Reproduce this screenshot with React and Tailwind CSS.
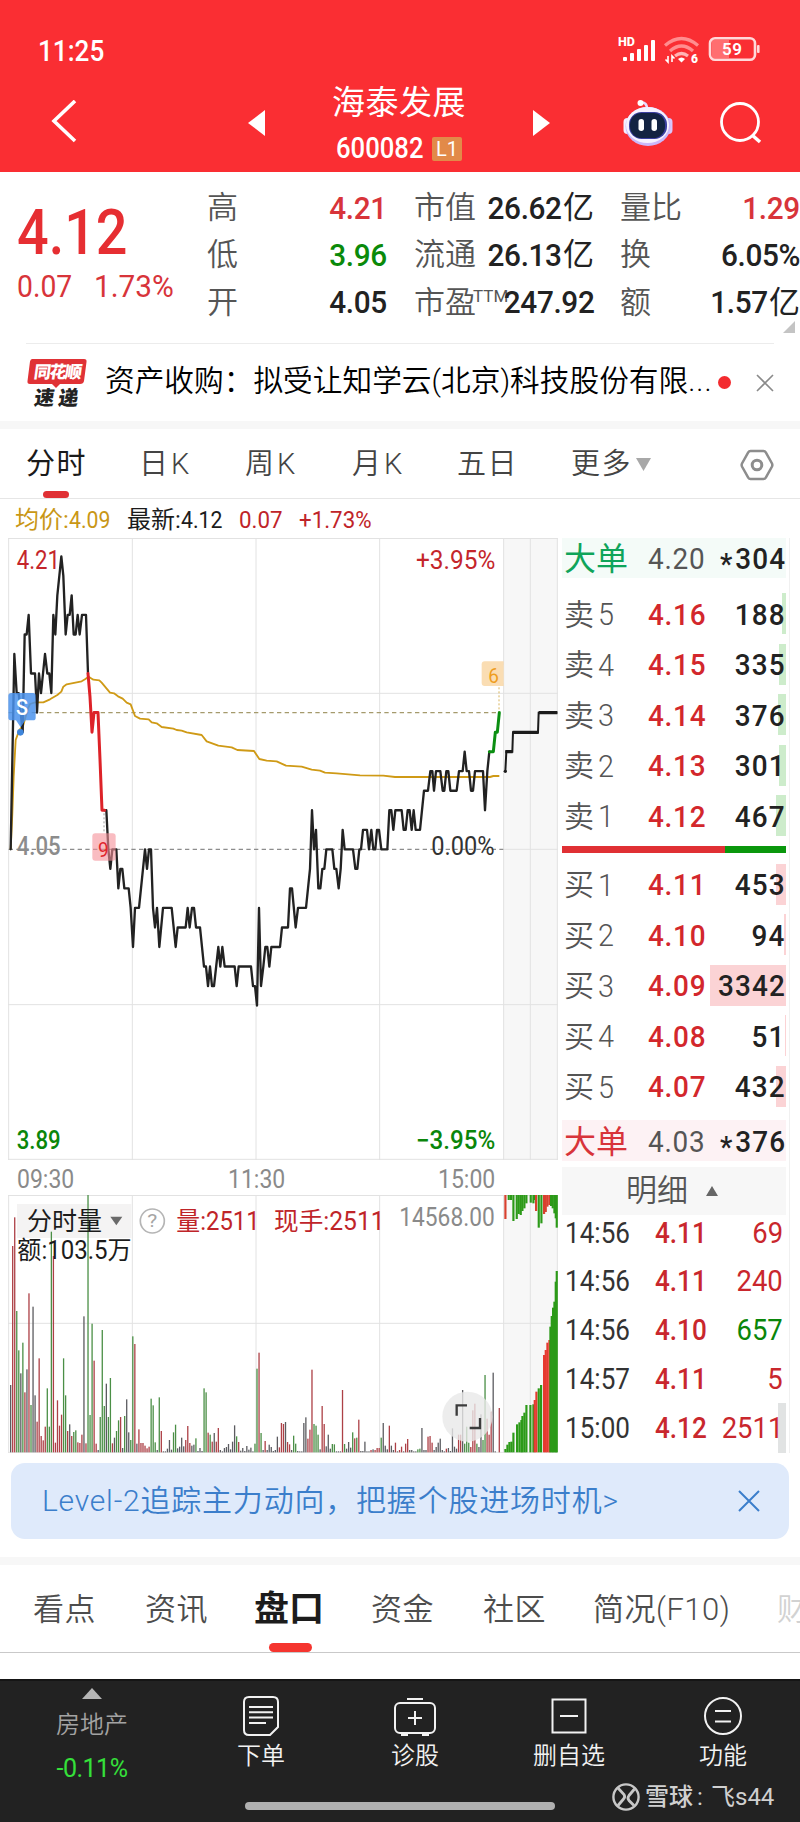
import React from "react";
import clsx from "clsx";

// [x, ticks from the previous close], x in chart units
const priceOpen = [
  [32, 0], [43, 10], [50, 8], [56, 8], [62, 7], [68, 6], [74, 11], [80, 11], [86, 12], [93, 9], [105, 9], [111, 7], [117, 9],
  [123, 8], [135, 10], [142, 9], [148, 9], [154, 8], [160, 12], [166, 11], [172, 13], [184, 15], [190, 14],
  [197, 11], [203, 12], [209, 12], [215, 13], [221, 11], [227, 11], [233, 12], [239, 11], [246, 12], [258, 12], [264, 9],
];
const priceDrop = [[264, 9], [270, 7.8], [276, 6], [282, 7], [294, 7], [300, 4.6], [306, 2], [314, 2]];
const priceMain = [
  [313, 2], [319, 2], [325, 0], [331, -1], [337, 0], [349, 0], [355, -2], [361, -1], [367, -1], [373, -2], [386, -2],
  [392, -3], [399, -5], [405, -3], [417, -3], [423, -2], [435, 0], [441, -1], [447, 0], [453, 0], [459, -3], [465, -4],
  [471, -3], [478, -5], [489, -3], [515, -3], [527, -5], [533, -4], [557, -4], [563, -3], [569, -4], [576, -3],
  [582, -3], [588, -4], [600, -4], [612, -6], [618, -6], [624, -7], [630, -6], [636, -7], [642, -7], [655, -5],
  [661, -6], [667, -5], [674, -6], [704, -6], [710, -7], [716, -6], [753, -6], [759, -7], [765, -7], [771, -8],
  [777, -3], [783, -7], [790, -6], [796, -5], [802, -5], [808, -6], [814, -5], [840, -5], [846, -4], [864, -4],
  [870, -2], [876, -2], [887, -4], [894, -3], [918, -3], [930, -1], [936, 2], [942, 0], [948, 1], [955, -2],
  [961, -2], [967, -1], [973, -1], [979, 0], [997, 0], [1003, -1], [1009, -1], [1016, -2], [1022, -1], [1028, 1],
  [1034, 0], [1059, 0], [1066, -1], [1072, -1], [1078, 0], [1083, 0], [1089, 1], [1101, 1], [1107, 0], [1114, 1],
  [1120, 0], [1126, 0], [1131, 1], [1137, 1], [1144, 0], [1162, 0], [1168, 2], [1174, 2], [1180, 1], [1186, 2], [1205, 2],
  [1211, 1], [1217, 1], [1223, 2], [1229, 2], [1235, 1], [1241, 2], [1247, 1], [1260, 1], [1272, 3], [1284, 3],
  [1291, 4], [1297, 4], [1302, 3], [1308, 4], [1321, 4], [1328, 3], [1333, 3], [1339, 4], [1345, 4], [1351, 3],
  [1370, 3], [1377, 4], [1388, 4], [1394, 5], [1400, 4], [1407, 4], [1413, 3], [1419, 3], [1425, 4], [1449, 4],
  [1455, 2], [1462, 4], [1468, 5],
];
const priceRise = [[1468, 5], [1480, 5], [1486, 6], [1492, 6], [1498, 7]];
const avgPoints =
  "32,958 37,850 41,740 47,630 58,600 70,585 84,535 90,522 105,517 130,517 150,508 172,495 184,485 190,470 200,463 245,454 255,448 266,440 280,449 298,451 305,458 330,488 342,490 354,499 368,506 380,518 392,523 405,558 420,566 446,568 455,577 470,580 485,591 520,596 530,600 545,602 560,607 605,615 620,634 655,647 695,652 712,660 762,663 778,687 800,692 830,694 858,707 905,710 935,719 960,722 975,728 1010,730 1080,736 1150,737 1185,741 1470,741 1480,738 1498,738";

// volume per minute, ten bars on each line: height + color key
const volumeRows = [
  "202k 619r 705r 424g 306g 237k 329g 180r 249k 477r",
  "142g 437k 171k 92r 282r 49r 36r 77r 192g 77g",
  "662g 589r 29r 156r 80r 113r 282g 171g 64r 84k",
  "49r 61g 66g 30r 28r 53r 408k 27r 774g 112g",
  "386g 275r 26r 7k 106g 367g 139g 206k 106g 223g",
  "27r 44k 64g 96g 106r 13k 109g 159k 60k 37g",
  "348g 325r 26k 69r 28r 28r 20r 12r 17r 161g",
  "141g 30g 7k 165g 64r 3k 3k 11k 37k 8k",
  "60g 83g 12k 17k 44k 18k 37r 79r 28r 20k",
  "23k 42g 4k 13k 4k 192g 180g 59r 53g 32r",
  "58k 32r 73r 7k 3k 13k 16k 25k 9k 32k",
  "81k 48g 31r 5k 13k 4k 19k 8k 14k 3k",
  "26g 251g 299r 58g 7k 34r 7k 23k 16k 4k",
  "7k 47k 15r 88r 85r 91k 31r 24r 7k 50g",
  "26g 4k 3k 3k 88k 105k 41r 68r 248r 85g",
  "80g 53g 9k 139r 85r 18k 53k 11k 25g 24g",
  "3k 3k 3k 187r 25g 11k 31k 14k 60g 42r",
  "44g 98r 4k 4k 32k 3k 3k 7r 9k 7r",
  "13r 13r 44g 88k 20k 9k 80r 20k 7k 29r",
  "3k 7r 17r 3k 26r 40r 7k 7k 3k 3k",
  "9g 11g 73k 7k 7k 47r 49r 29r 7k 16k",
  "29k 41k 7k 3k 11r 13k 4k 72k 17k 11k",
  "53r 53r 187k 26g 77g 29g 16r 126r 146r 26g",
  "16k 114k 37g 232g 101r 53r 122r 239k 3k 0k",
  "133r",
];
const volumeColors = { r: "#ad4046", g: "#4b8f46", k: "#5c5c60" };
const volumes = volumeRows.join(" ").split(" ");

// call auction: [x, top, color]
const auctionBars = [
  [1513, 927, "g"], [1519, 914, "g"], [1525, 906, "g"], [1531, 905, "g"], [1537, 878, "g"], [1548, 853, "g"],
  [1555, 847, "g"], [1561, 840, "g"], [1564, 828, "g"], [1570, 818, "g"], [1576, 795, "g"], [1588, 795, "g"],
  [1597, 793, "g"], [1601, 780, "r"], [1606, 755, "r"], [1613, 745, "g"], [1620, 735, "g"], [1629, 645, "r"],
  [1634, 630, "r"], [1639, 608, "r"], [1645, 600, "r"], [1648, 560, "g"], [1652, 528, "g"], [1656, 503, "g"],
  [1660, 485, "g"], [1664, 425, "g"], [1667, 393, "g"],
];
const auctionTop = [
  [1513, 237, "r"], [1523, 180, "g"], [1530, 180, "g"], [1537, 243, "g"], [1547, 237, "g"], [1553, 222, "g"], [1559, 225, "g"],
  [1564, 213, "g"], [1570, 205, "g"], [1576, 190, "g"], [1589, 188, "g"], [1597, 190, "g"], [1600, 180, "g"], [1605, 213, "r"],
  [1613, 263, "g"], [1621, 250, "g"], [1629, 222, "r"], [1634, 216, "r"], [1639, 200, "r"], [1645, 195, "r"],
  [1650, 198, "g"], [1655, 205, "g"], [1660, 220, "g"], [1664, 235, "g"], [1667, 263, "g"],
];

const sells = [
  { name: "卖5", price: "4.16", vol: "188", bar: "w-[4px]" },
  { name: "卖4", price: "4.15", vol: "335", bar: "w-[7px]" },
  { name: "卖3", price: "4.14", vol: "376", bar: "w-[8px]" },
  { name: "卖2", price: "4.13", vol: "301", bar: "w-[7px]" },
  { name: "卖1", price: "4.12", vol: "467", bar: "w-[10px]" },
];
const buys = [
  { name: "买1", price: "4.11", vol: "453", bar: "w-[10px]" },
  { name: "买2", price: "4.10", vol: "94", bar: "w-[2px]" },
  { name: "买3", price: "4.09", vol: "3342", bar: "w-[76px]" },
  { name: "买4", price: "4.08", vol: "51", bar: "w-px" },
  { name: "买5", price: "4.07", vol: "432", bar: "w-[10px]" },
];
const deals = [
  { time: "14:56", price: "4.11", vol: "69" },
  { time: "14:56", price: "4.11", vol: "240" },
  { time: "14:56", price: "4.10", vol: "657", down: true },
  { time: "14:57", price: "4.11", vol: "5" },
  { time: "15:00", price: "4.12", vol: "2511" },
];

const toPoints = (list) => list.map(([x, t]) => `${x},${(958 - t * 58.6).toFixed(1)}`).join(" ");

// condensed figures
const Num = ({ className, right, wide, children }) => (
  <span
    className={clsx(
      "inline-block whitespace-nowrap",
      right ? "origin-right" : "origin-left",
      wide ? "scale-x-[0.93]" : "scale-x-[0.885]",
      className
    )}
  >
    {children}
  </span>
);

const StatusBar = () => (
  <div className="flex h-[52px] mt-[25px] items-center justify-between pl-[38px] pr-[37px]">
    <Num className="text-[29.500px] font-medium">11:25</Num>
    <svg width="146" height="30" viewBox="0 0 146 30" fill="none">
      <text x="1" y="10" fontSize="12" fontWeight="800" fill="#fff" textLength="17" lengthAdjust="spacingAndGlyphs">HD</text>
      <g fill="#fff">
        <rect x="6" y="21" width="4" height="4" rx="1" />
        <rect x="13" y="17" width="4" height="8" rx="1" />
        <rect x="20" y="13" width="4" height="12" rx="1" />
        <rect x="27" y="9" width="4" height="16" rx="1" />
        <rect x="34" y="4" width="4" height="21" rx="1" />
      </g>
      <g stroke="#ff8d8f" strokeWidth="3.2">
        <path d="M48 9.500 Q64.500 -4.500 81 9.500" />
        <path d="M53 15 Q64.500 5 76 15" />
        <path d="M58 20 Q64.500 15 71 20" stroke="#ffb3b4" />
      </g>
      <path d="M61 23 Q64.500 20 68 23 L64.500 26.500 Z" fill="#fff" />
      <path d="M51 20 v6 l-2.500 -2.500 M55 26 v-6 l2.500 2.500" stroke="#fff" strokeWidth="1.600" />
      <text x="74" y="27" fontSize="12" fontWeight="900" fill="#fff">6</text>
      <rect x="95" y="4" width="17" height="18" fill="#ff6e70" />
      <rect x="93" y="2.200" width="45" height="21.500" rx="5" stroke="#ffd9da" strokeWidth="2.600" />
      <rect x="140" y="9" width="2.600" height="8" rx="1" fill="#ffd9da" />
      <text x="105" y="19" fontSize="17" fontWeight="600" fill="#fff" textLength="20">59</text>
    </svg>
  </div>
);

const Robot = () => (
  <svg width="50" height="48" viewBox="0 0 50 48" className="ml-[72px]">
    <path d="M16 4 Q24 2 24 10" stroke="#e9dcff" strokeWidth="2.500" fill="none" />
    <circle cx="17.500" cy="4" r="3" fill="#fff" />
    <rect x="0.500" y="19" width="8" height="16" rx="4" fill="#f4efff" />
    <rect x="41.500" y="19" width="8" height="16" rx="4" fill="#d9c6fb" />
    <ellipse cx="25" cy="27.500" rx="22.500" ry="19.500" fill="#cbb8fb" />
    <ellipse cx="24.500" cy="26" rx="21.500" ry="18" fill="#f6f2ff" />
    <rect x="6" y="13" width="38" height="27" rx="12.500" fill="#3b3fa0" />
    <rect x="7" y="14" width="35" height="25" rx="11.500" fill="#132342" />
    <rect x="15.500" y="20" width="5.500" height="12" rx="2.700" fill="#fff" />
    <rect x="28.500" y="20" width="5.500" height="12" rx="2.700" fill="#fff" />
  </svg>
);

const Header = () => (
  <div className="h-[172px] bg-[#fa2e33] text-white overflow-hidden">
    <StatusBar />
    <div className="flex h-[90px] items-center pl-[49px] pt-px">
      <svg width="30" height="46" viewBox="0 0 30 46" fill="none" stroke="#fff" strokeWidth="3.600">
        <path d="M26 1 L5 21 L26 41" />
      </svg>
      <svg width="18" height="26" viewBox="0 0 18 26" className="ml-[169px]">
        <path d="M0 13 L17 0 V26 Z" fill="#fff" />
      </svg>
      <div className="flex w-[133px] flex-col ml-[66px] pt-[4px]">
        <h1 className="text-[33px] leading-[48px] tracking-[0.5px] whitespace-nowrap">海泰发展</h1>
        <div className="flex h-[44px] items-center pl-[4px]">
          <Num className="w-[96px] text-[29px] font-medium">600082</Num>
          <span className="flex h-6 w-[30px] items-center justify-center bg-[#e28a49] text-[20px] leading-none rounded-[2px]">L1</span>
        </div>
      </div>
      <svg width="18" height="26" viewBox="0 0 18 26" className="ml-[68px]">
        <path d="M17 13 L0 0 V26 Z" fill="#fff" />
      </svg>
      <Robot />
      <svg width="44" height="44" viewBox="0 0 44 44" fill="none" stroke="#fff" strokeWidth="2.800" className="ml-[46px]">
        <circle cx="21" cy="21" r="18.500" />
        <path d="M33 34 L41 41" strokeWidth="3.500" />
      </svg>
    </div>
  </div>
);

const Stat = ({ label, sup, value, unit, color }) => (
  <div className="flex h-[47.3px] items-center whitespace-nowrap">
    <span className="flex shrink-0 text-[31px] font-[350] text-[#555]">
      {label}
      {sup && <span className="-ml-[3px] text-[17px] font-normal leading-none pt-[1px]">{sup}</span>}
    </span>
    <span className={clsx("flex min-w-0 flex-1 items-center justify-end", color || "text-[#222]")}>
      <Num right wide className="shrink-0 text-[32px] font-medium tracking-[-0.4px]">{value}</Num>
      {unit && <span className="shrink-0 text-[31px] ml-[1px]">{unit}</span>}
    </span>
  </div>
);

const Quote = () => (
  <div className="relative flex h-[171px] pt-[12px] leading-none">
    <div className="w-[207px] shrink-0 pl-[17px] pt-[16px] text-[#e62e32]">
      <Num className="text-[63px] leading-[66px] font-medium">4.12</Num>
      <div className="flex text-[32px] h-[40px] items-center text-[#d8343a]">
        <Num className="w-[77px]">0.07</Num>
        <Num wide>1.73%</Num>
      </div>
    </div>
    <div className="w-[180px] shrink-0">
      <Stat label="高" value="4.21" color="text-[#d8343a]" />
      <Stat label="低" value="3.96" color="text-[#0a8a0a]" />
      <Stat label="开" value="4.05" />
    </div>
    <div className="w-[180px] shrink-0 ml-[27px]">
      <Stat label="市值" value="26.62" unit="亿" />
      <Stat label="流通" value="26.13" unit="亿" />
      <Stat label="市盈" sup="TTM" value="247.92" />
    </div>
    <div className="w-[180px] shrink-0 ml-[26px]">
      <Stat label="量比" value="1.29" color="text-[#d8343a]" />
      <Stat label="换" value="6.05%" />
      <Stat label="额" value="1.57" unit="亿" />
    </div>
    <svg width="12" height="12" viewBox="0 0 12 12" className="absolute right-[5px] bottom-[10px]">
      <path d="M12 0 V12 H0 Z" fill="#c4c4c4" />
    </svg>
  </div>
);

const News = () => (
  <div className="px-[26px] border-b-[8px] border-[#f7f7f7]">
    <div className="flex h-[78px] items-center border-t border-[#ececec]">
      <svg width="62" height="50" viewBox="0 0 62 50" className="shrink-0 overflow-visible">
        <path d="M6 1 H58 Q61 1 60.500 4 L58 23 Q57.500 26 54 26 H34 L30 30 L26 26 H4 Q1 26 1.500 23 L4 3.500 Q4.500 1 6 1 Z" fill="#e03236" />
        <g transform="skewX(-8)" fontWeight="900">
          <text x="10" y="20" fontSize="17" fill="#fff" textLength="48">同花顺</text>
          <text x="14" y="47" fontSize="20" fill="#222" textLength="44">速递</text>
        </g>
      </svg>
      <p className="ml-[17px] w-[609px] shrink-0 whitespace-nowrap text-[29.700px] font-[350] text-black pb-[2px]">
        资产收购：拟受让知学云(北京)科技股份有限<span className="tracking-[1px]">...</span>
      </p>
      <span className="ml-[4px] size-[13px] shrink-0 rounded-full bg-[#f32b2f]"></span>
      <svg width="18" height="18" viewBox="0 0 18 18" stroke="#8a8a8a" strokeWidth="1.600" className="ml-[25px] shrink-0">
        <path d="M1 1 L17 17 M17 1 L1 17" />
      </svg>
    </div>
  </div>
);

const ChartTabs = () => (
  <div className="relative flex h-[70px] items-center border-b border-[#e6e6e6] pl-[26px] pt-[2px] text-[29px] font-[350] leading-none tracking-[1.5px] text-[#444]">
    <div className="w-[113px] font-normal text-[#1a1a1a]">分时</div>
    <div className="w-[106px] tracking-[3px]">日K</div>
    <div className="w-[107px] tracking-[3px]">周K</div>
    <div className="w-[105px] tracking-[3px]">月K</div>
    <div className="w-[114px]">五日</div>
    <div className="w-[65px]">更多</div>
    <svg width="15" height="13" viewBox="0 0 15 13">
      <path d="M0 0 H15 L7.500 13 Z" fill="#a8a8a8" />
    </svg>
    <svg width="34" height="32" viewBox="0 0 34 32" fill="none" stroke="#8d8d8d" strokeWidth="2.500" className="ml-[89px]">
      <path d="M10.500 2 H23.500 Q25 2 25.800 3.300 L32 14.500 Q32.700 16 32 17.500 L25.800 28.700 Q25 30 23.500 30 H10.500 Q9 30 8.200 28.700 L2 17.500 Q1.300 16 2 14.500 L8.200 3.300 Q9 2 10.500 2 Z" />
      <circle cx="17" cy="16" r="4.800" strokeWidth="3" />
    </svg>
    <span className="absolute left-[43px] bottom-0 h-[7px] w-[26px] rounded-full bg-[#e03034]"></span>
  </div>
);

const Summary = () => (
  <div className="flex h-[39px] items-center pl-[15px] pt-[3px] text-[24px] leading-none">
    <div className="flex w-[112px] text-[#c99716]">均价:<Num>4.09</Num></div>
    <div className="flex w-[112px] text-[#1c1c1c]">最新:<Num>4.12</Num></div>
    <Num wide className="w-[60px] text-[#bf2429]">0.07</Num>
    <Num wide className="text-[#bf2429]">+1.73%</Num>
  </div>
);

const Label = ({ x, y, w, size = 75, fill, weight = 400, children }) => (
  <text x={x} y={y} fontSize={size} fill={fill} fontWeight={weight} textLength={w} lengthAdjust="spacingAndGlyphs">
    {children}
  </text>
);

const PriceChart = () => (
  <svg width="550" height="622" viewBox="24 24 1650 1866" fill="none" className="block">
    <rect x="1509" y="24" width="165" height="1866" fill="#f7f7f7" />
    <g stroke="#e2e2e2" strokeWidth="3">
      <path d="M24 25.500 H1674 M24 490 H1674 M24 1424 H1674 M24 1888 H1674 M1510 958 H1674" />
      <path d="M26 24 V1890 M397 24 V1890 M768 24 V1890 M1139 24 V1890 M1511 24 V1890 M1591 24 V1890 M1672 24 V1890" />
    </g>
    <path d="M26 548 H1500" stroke="#a59a6c" strokeWidth="3.500" strokeDasharray="13 10" />
    <path d="M26 958 H1510" stroke="#8d8d8d" strokeWidth="3.500" strokeDasharray="13 10" />
    <Label x={50} y={117} w={130} fill="#c4262b">4.21</Label>
    <Label x={1248} y={117} w={238} fill="#c4262b">+3.95%</Label>
    <Label x={50} y={976} w={132} fill="#8c8c8c" weight={500}>4.05</Label>
    <Label x={1294} y={976} w={190} fill="#333">0.00%</Label>
    <Label x={50} y={1856} w={132} fill="#0a860a" weight={500}>3.89</Label>
    <Label x={1248} y={1856} w={238} fill="#0a860a" weight={500}>−3.95%</Label>
    <polyline points={avgPoints} stroke="#cf9a16" strokeWidth="5.500" strokeLinejoin="round" />
    <g strokeWidth="7" strokeLinejoin="round" strokeLinecap="round">
      <polyline points={toPoints(priceOpen)} stroke="#222" />
      <polyline points={toPoints(priceMain)} stroke="#222" />
      <polyline points={toPoints(priceDrop)} stroke="#dd2228" strokeWidth="9" />
      <polyline points={toPoints(priceRise)} stroke="#0b8f12" strokeWidth="9" />
    </g>
    <path d="M1516 724 L1519 665 H1537 L1539 607 H1614 L1616 548 H1672" stroke="#1c1c1c" strokeWidth="6" />
    <path d="M1516 665 H1538 M1538 607 H1616 M1616 548 H1672" stroke="#1c1c1c" strokeWidth="10" />
    <circle cx="1516" cy="724" r="5" fill="#1c1c1c" />
    {/* trade markers */}
    <path d="M35 489 H99 Q107 489 107 497 V563 Q107 571 99 571 H76 L62 592 L48 571 H35 Q25 571 25 563 V497 Q25 489 35 489 Z" fill="#4a92ec" opacity="0.850" />
    <circle cx="61" cy="607" r="10" fill="#3f86dc" />
    <Label x={48} y={556} w={36} size={66} fill="#fff" weight={500}>S</Label>
    <path d="M312 850 V908" stroke="#999" strokeWidth="3" strokeDasharray="6 6" />
    <rect x="277" y="910" width="70" height="82" rx="9" fill="#f58f97" opacity="0.600" />
    <Label x={294} y={982} w={32} size={62} fill="#e0262c">9</Label>
    <path d="M1497 472 V545" stroke="#d8b45c" strokeWidth="3" strokeDasharray="6 6" />
    <path d="M1454 394 H1511 V468 H1454 Q1445 468 1445 459 V403 Q1445 394 1454 394 Z" fill="#fad9ab" opacity="0.900" />
    <Label x={1465} y={460} w={32} size={62} fill="#ef9d1f">6</Label>
  </svg>
);

const TimeAxis = () => (
  <div className="flex h-[35px] items-center pl-[9px] pt-[3px] text-[26px] leading-none text-[#8a8a8a]">
    <Num className="w-[211px]">09:30</Num>
    <Num className="w-[210px]">11:30</Num>
    <Num>15:00</Num>
  </div>
);

const VolumeChart = () => (
  <svg width="550" height="258" viewBox="24 165 1650 774" fill="none" className="block">
    <rect x="1509" y="165" width="165" height="774" fill="#f7f7f7" />
    <g stroke="#e2e2e2" strokeWidth="3">
      <path d="M24 166.500 H1674 M24 550 H1674 M24 937 H1674" />
      <path d="M26 165 V939 M397 165 V939 M768 165 V939 M1139 165 V939 M1511 165 V939 M1591 165 V939 M1672 165 V939" />
    </g>
    <rect x="51" y="192" width="343" height="102" fill="#f3f2f2" opacity="0.900" />
    {volumes.map((v, i) => {
      const h = parseInt(v);
      return <rect key={i} x={30 + i * 6.108} y={937 - h} width="3.900" height={h} fill={volumeColors[v.slice(-1)]} />;
    })}
    {auctionBars.map(([x, top, c], i) => (
      <rect key={i} x={x} y={top} width="6.500" height={937 - top} fill={c == "r" ? "#e63a30" : "#2c9a18"} />
    ))}
    {auctionTop.map(([x, bottom, c], i) => (
      <rect key={i} x={x} y="165" width="6.500" height={bottom - 165} fill={c == "r" ? "#d8402f" : "#2c9a18"} />
    ))}
    <Label x={81} y={270} w={225} size={76} fill="#1c1c1c">分时量</Label>
    <path d="M331 230 H367 L349 256 Z" fill="#6a6a6a" />
    <circle cx="457" cy="243" r="36" stroke="#b5b5b5" strokeWidth="5" />
    <Label x={442} y={262} w={30} size={54} fill="#a5a5a5">?</Label>
    <Label x={529} y={270} w={250} size={75} fill="#bf2429">量:2511</Label>
    <Label x={822} y={270} w={332} size={75} fill="#bf2429">现手:2511</Label>
    <Label x={1198} y={257} w={286} size={75} fill="#8a8a8a">14568.00</Label>
    <Label x={52} y={357} w={343} size={75} fill="#1c1c1c">额:103.5万</Label>
    <circle cx="1402" cy="830" r="75" fill="#e9e9e9" opacity="0.800" />
    <path d="M1370 827 V796 H1401 M1409 864 H1440 V834" stroke="#3c3c3c" strokeWidth="7" />
  </svg>
);

const BigOrder = ({ price, vol, className }) => (
  <div className={clsx("grid h-[41px] grid-cols-[84px_1fr_auto] items-center pl-[2px] pt-[2px] leading-none", className)}>
    <span className="text-[32px]">大单</span>
    <Num wide className="text-[30px] tracking-[0.8px] text-[#555]">{price}</Num>
    <Num right wide className="text-[30px] tracking-[1.2px] text-[#222] font-medium">
      <span className="relative top-[5px] mr-[2px]">*</span>{vol}
    </Num>
  </div>
);

const BookRow = ({ row, barColor }) => (
  <div className="relative grid h-[50.5px] grid-cols-[84px_1fr_auto] items-center pl-[2px] leading-none text-[30px]">
    <span className={clsx("absolute right-0 top-[4px] h-[41px]", row.bar, barColor)}></span>
    <span className="flex items-center text-[#555]">
      <span className="text-[30px] font-[350] w-[34px]">{row.name[0]}</span>
      <Num wide className="text-[31px] font-[350]">{row.name[1]}</Num>
    </span>
    <Num wide className="tracking-[0.8px] font-medium text-[#d3272c]">{row.price}</Num>
    <Num right wide className="relative tracking-[1.2px] font-medium text-[#222]">{row.vol}</Num>
  </div>
);

const OrderBook = () => (
  <div className="flex w-[232px] flex-col border-r border-[#f0f0f0] pl-[4px] pr-[3px]">
    <BigOrder price="4.20" vol="304" className="bg-[#f4fbf8] text-[#0fa45a]" />
    <div className="mt-[11px]">
      {sells.map((row) => <BookRow key={row.name} row={row} barColor="bg-[#cdeccb]" />)}
    </div>
    <div className="mt-[4px] flex h-[7px]">
      <span className="w-[163px] bg-[#e03034]"></span>
      <span className="flex-1 bg-[#0a970d]"></span>
    </div>
    <div className="mt-[7px]">
      {buys.map((row) => <BookRow key={row.name} row={row} barColor="bg-[#fbd3d5]" />)}
    </div>
    <BigOrder price="4.03" vol="376" className="mt-[8px] bg-[#fdf2f4] text-[#d8343a]" />
    <div className="mt-[6px] flex h-[49px] items-center bg-[#f7f7f7] pl-[64px] text-[#555]">
      <span className="text-[31px] font-[350] leading-none">明细</span>
      <svg width="12" height="10" viewBox="0 0 12 10" className="ml-[18px]">
        <path d="M0 10 L6 0 L12 10 Z" fill="#666" />
      </svg>
    </div>
    <div className="relative -mt-[6px]">
      <span className="absolute right-0 bottom-0 h-[50px] w-[8px] bg-[#e1e3e3]"></span>
      {deals.map((d, i) => (
        <div key={i} className="relative flex h-[48.8px] items-center pl-[3px] text-[29.500px] leading-none text-[#c9272d]">
          <Num className="w-[90px] text-[#333]">{d.time}</Num>
          <Num className="font-medium">{d.price}</Num>
          <Num right wide className={clsx("ml-auto mr-[3px]", d.down && "text-[#0a860a]")}>{d.vol}</Num>
        </div>
      ))}
    </div>
  </div>
);

const Banner = () => (
  <div className="mx-[11px] mt-[10px] flex h-[76px] items-center justify-between rounded-[14px] bg-[#dfeafb] pl-[31px] pr-[29px] text-[#3b7ecb]">
    <span className="text-[30px] tracking-[0.8px] font-[350] leading-none whitespace-nowrap">Level-2追踪主力动向，把握个股进场时机&gt;</span>
    <svg width="22" height="22" viewBox="0 0 22 22" stroke="#3b7ecb" strokeWidth="2">
      <path d="M1 1 L21 21 M21 1 L1 21" />
    </svg>
  </div>
);

const InfoTabs = () => (
  <div className="relative flex h-[96px] items-center border-t-[8px] border-b border-t-[#f7f7f7] border-b-[#c9c9c9] mt-[18px] pl-[33px] pt-[2px] text-[31px] font-[350] leading-none text-[#4d4d4d] whitespace-nowrap tracking-[0.5px]">
    <div className="w-[112px] shrink-0">看点</div>
    <div className="w-[109px] shrink-0">资讯</div>
    <div className="w-[117px] shrink-0 text-[35px] font-bold tracking-normal text-[#1c1c1c]">盘口</div>
    <div className="w-[112px] shrink-0">资金</div>
    <div className="w-[110px] shrink-0">社区</div>
    <div className="w-[184px] shrink-0">简况(F10)</div>
    <div className="shrink-0 text-[#d2d2d2]">财</div>
    <span className="absolute left-[269px] bottom-0 h-[9px] w-[43px] rounded-full bg-[#f5352f]"></span>
  </div>
);

const NavItem = ({ label, children }) => (
  <div className="flex w-[154px] flex-col items-center pt-[13px] text-[#f2f2f2]">
    <svg width="44" height="44" viewBox="0 0 44 44" fill="none" stroke="#f2f2f2" strokeWidth="2">
      {children}
    </svg>
    <span className="mt-[6px] text-[24px] leading-none font-[350]">{label}</span>
  </div>
);

const BottomBar = () => (
  <div className="relative mt-[26px] flex h-[143px] border-t-2 border-[#151515] bg-[#222]">
    <div className="flex w-[184px] flex-col items-center pt-[7px] leading-none">
      <svg width="20" height="11" viewBox="0 0 20 11">
        <path d="M0 11 L10 0 L20 11 Z" fill="#b5b5b5" />
      </svg>
      <span className="mt-[14px] text-[24px] font-[350] text-[#a3a3a3]">房地产</span>
      <span className="mt-[19px] text-[25px] text-[#35e03a] tracking-[-0.5px]">-0.11%</span>
    </div>
    <NavItem label="下单">
      <path d="M10 3 H34 Q39 3 39 8 V33 L31 41 H10 Q5 41 5 36 V8 Q5 3 10 3 Z" />
      <path d="M10 13 H34 M10 18.300 H34 M10 23.600 H34 M10 29 H27" />
    </NavItem>
    <NavItem label="诊股">
      <rect x="2" y="9" width="40" height="30" rx="5" />
      <path d="M14 5 H30 M22 17 V31 M15 24 H29 M8 41 H15 M29 41 H36" />
    </NavItem>
    <NavItem label="删自选">
      <rect x="5.500" y="5.500" width="33" height="33" />
      <path d="M13 22 H31" />
    </NavItem>
    <NavItem label="功能">
      <circle cx="22" cy="22" r="18" />
      <path d="M14 17 H30 M14 27.500 H30" />
    </NavItem>
    <span className="absolute left-[245px] bottom-[12px] h-[8px] w-[310px] rounded-full bg-[#b0b0b0]"></span>
    <div className="absolute left-[612px] bottom-[11px] flex items-center whitespace-nowrap text-[24px] leading-none text-[#d0d0d0]">
      <svg width="28" height="28" viewBox="0 0 28 28" fill="none" stroke="#c8c8c8" strokeWidth="2.400">
        <circle cx="14" cy="14" r="12.600" />
        <path d="M6 5 L12 11.500 Q13.500 14 11.500 16 L6 22.500 M22 22.500 L17 17.500 Q15 15 17 12.500 L22.500 6" strokeWidth="2.800" />
      </svg>
      <span className="ml-[5px] font-medium">雪球</span>
      <span className="w-[18px] pl-[4px]">:</span>
      <span>飞s44</span>
    </div>
  </div>
);

const App = () => {
  return (
    <div className="h-[1822px] w-[800px] overflow-hidden bg-white [font-family:Roboto,'Noto_Sans_CJK_SC',sans-serif]">
      <Header />
      <Quote />
      <News />
      <ChartTabs />
      <Summary />
      <div className="flex h-[915px] pl-[8px]">
        <div className="w-[550px]">
          <PriceChart />
          <TimeAxis />
          <VolumeChart />
        </div>
        <OrderBook />
      </div>
      <Banner />
      <InfoTabs />
      <BottomBar />
    </div>
  );
};

export default App;
